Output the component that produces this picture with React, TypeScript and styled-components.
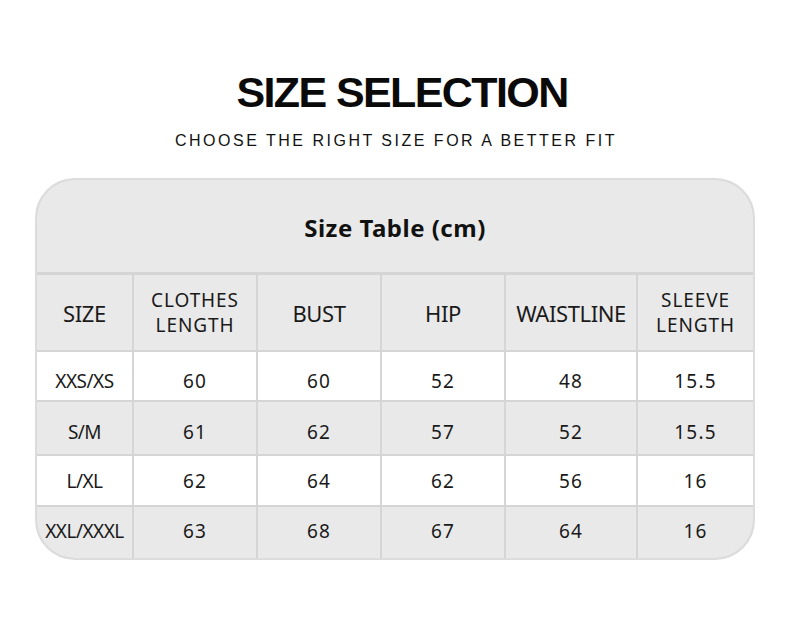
import React from "react";
import styled, { createGlobalStyle } from "styled-components";

const Global = createGlobalStyle`
  html, body { margin: 0; padding: 0; background: #ffffff; }
  body { width: 790px; height: 632px; overflow: hidden; }
`;

const Page = styled.div`
  width: 790px;
  height: 632px;
  display: flex;
  flex-direction: column;
  align-items: center;
  box-sizing: border-box;
  padding-top: 68px;
`;

const Title = styled.h1`
  margin: 0 0 0 14px;
  font-family: "Liberation Sans", Arial, sans-serif;
  font-weight: 700;
  font-size: 43px;
  line-height: 48px;
  letter-spacing: -1.6px;
  color: #0a0a0a;
`;

const Subtitle = styled.p`
  margin: 15px 0 0 2px;
  font-family: "Liberation Sans", Arial, sans-serif;
  font-size: 16px;
  line-height: 20px;
  letter-spacing: 2.5px;
  color: #111;
`;

const Card = styled.div`
  margin-top: 27px;
  width: 720px;
  box-sizing: border-box;
  border: 2px solid #dcdcdc;
  border-radius: 40px;
  overflow: hidden;
  background: #d5d5d5;
  display: flex;
  flex-direction: column;
  gap: 3px;
`;

const CardHead = styled.div`
  height: 92px;
  background: #e9e9e9;
  display: flex;
  align-items: center;
  justify-content: center;
  padding-top: 3px;
  box-sizing: border-box;
  font-family: "Noto Sans", "Open Sans", sans-serif;
  font-weight: 700;
  font-size: 24px;
  letter-spacing: 0.5px;
  color: #111;
`;

const Grid = styled.div`
  display: grid;
  grid-template-columns: 95px 122px 122px 122px 130px 115px;
  grid-template-rows: 75px 48px 52px 49px 51px;
  gap: 2px;
`;

const Cell = styled.div<{ $gray?: boolean; $head?: boolean; $small?: boolean; $nudge?: number }>`
  background: ${(p) => (p.$gray ? "#e9e9e9" : "#ffffff")};
  display: flex;
  align-items: center;
  justify-content: center;
  text-align: center;
  padding-top: ${(p) => Math.max(0, p.$nudge ?? 0)}px;
  padding-bottom: ${(p) => Math.max(0, -(p.$nudge ?? 0))}px;
  box-sizing: border-box;
  font-family: "Noto Sans", "Open Sans", sans-serif;
  color: #1a1a1a;
  font-size: ${(p) => (p.$head ? (p.$small ? "19px" : "22px") : "19px")};
  line-height: 25px;
  letter-spacing: ${(p) => (p.$head ? (p.$small ? "0.9px" : "-0.4px") : "1.2px")};
  white-space: nowrap;
`;

const SizeCell = styled(Cell)`
  letter-spacing: -0.5px;
`;

const headers: { label: React.ReactNode; small?: boolean }[] = [
  { label: "SIZE" },
  { label: <>CLOTHES<br />LENGTH</>, small: true },
  { label: "BUST" },
  { label: "HIP" },
  { label: "WAISTLINE" },
  { label: <>SLEEVE<br />LENGTH</>, small: true },
];

const rows: string[][] = [
  ["XXS/XS", "60", "60", "52", "48", "15.5"],
  ["S/M", "61", "62", "57", "52", "15.5"],
  ["L/XL", "62", "64", "62", "56", "16"],
  ["XXL/XXXL", "63", "68", "67", "64", "16"],
];

const rowNudge = [11, 8, 2, -2];

export default function App() {
  return (
    <>
      <Global />
      <Page>
        <Title>SIZE SELECTION</Title>
        <Subtitle>CHOOSE THE RIGHT SIZE FOR A BETTER FIT</Subtitle>
        <Card>
          <CardHead>Size Table (cm)</CardHead>
          <Grid>
            {headers.map((h, i) => (
              <Cell key={i} $gray $head $small={h.small} $nudge={1}>
                {h.label}
              </Cell>
            ))}
            {rows.map((r, ri) =>
              r.map((v, ci) =>
                ci === 0 ? (
                  <SizeCell key={`${ri}-${ci}`} $gray={ri % 2 === 1} $nudge={rowNudge[ri]}>
                    {v}
                  </SizeCell>
                ) : (
                  <Cell key={`${ri}-${ci}`} $gray={ri % 2 === 1} $nudge={rowNudge[ri]}>
                    {v}
                  </Cell>
                )
              )
            )}
          </Grid>
        </Card>
      </Page>
    </>
  );
}
